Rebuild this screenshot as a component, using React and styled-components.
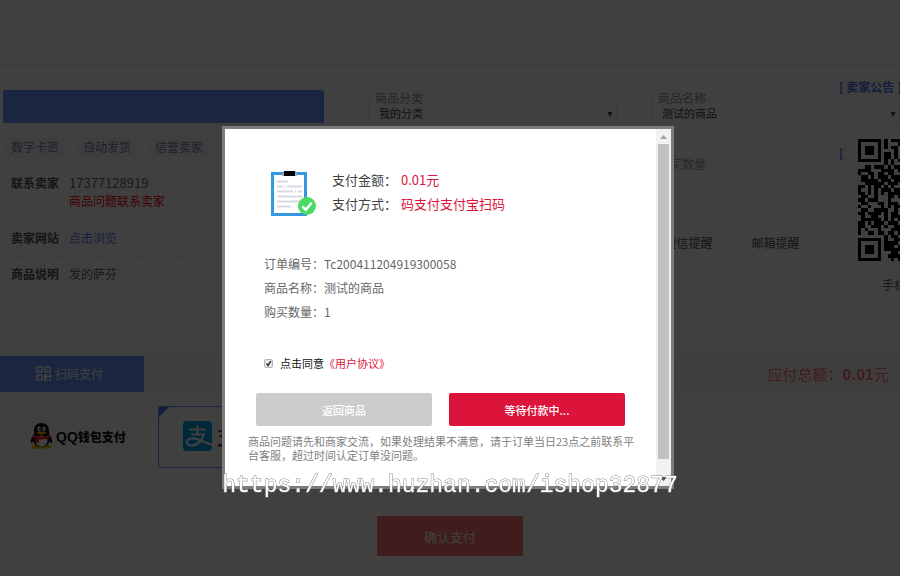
import React, { useState } from "react";
import styled, { createGlobalStyle } from "styled-components";

const GlobalStyle = createGlobalStyle`
  * {
    box-sizing: border-box;
  }
  body {
    margin: 0;
    background: #fff;
    color: #666;
    font-family: "Noto Sans CJK SC", sans-serif;
    font-size: 12px;
    line-height: 18px;
  }
  button,
  input,
  select {
    margin: 0;
    font-family: inherit;
  }
  a {
    text-decoration: none;
  }
`;

const Page = styled.div`
  position: relative;
  min-height: 100vh;
  overflow: hidden;
`;

const Header = styled.header`
  height: 65px;
  border-bottom: 1px solid #e6e6e6;
`;

const Main = styled.main`
  display: grid;
  grid-template-columns: 333px 1fr;
  column-gap: 35px;
  padding-top: 16px;
`;

const Seller = styled.section`
  height: 243px;
  padding: 8px 8px 0 3px;
  border: 1px solid #f0f0f0;
  border-left: none;
`;

const SellerTitle = styled.div`
  height: 33px;
  border-radius: 2px;
  background: #6898ff;
`;

const Tags = styled.div`
  display: flex;
  gap: 10px;
  margin: 14px 0 17px 1px;
`;

const Tag = styled.span`
  padding: 0 7px;
  line-height: 20px;
  background: #f7f7f7;
  color: #7c82b4;
`;

const Facts = styled.dl`
  margin: 0 0 0 8px;
`;

const Fact = styled.div`
  display: flex;
  gap: 10px;
  padding: 0 0 10px;
  & + & {
    padding: 8px 0 9px;
    border-top: 1px dashed #e4e4e4;
  }
  dt {
    font-weight: 700;
    color: #555;
  }
  dd {
    margin: 0;
  }
  a {
    color: #5a80f0;
  }
`;

const Phone = styled.div`
  font-size: 13px;
`;

const Warning = styled.div`
  color: #f00;
`;

const Order = styled.section`
  position: relative;
`;

const Fields = styled.form`
  display: grid;
  grid-template-columns: 1fr 1fr;
  gap: 17px 34px;
`;

const Field = styled.div`
  display: flex;
  flex-direction: column;
  min-width: 0;
`;

const Hint = styled.a`
  height: 11px;
  line-height: 11px;
  padding-left: 188px;
  font-weight: 700;
  white-space: nowrap;
  color: #4a78f0;
`;

const FieldBox = styled.fieldset`
  position: relative;
  min-width: 0;
  height: 38px;
  margin: 0;
  padding: 0;
  border: 1px solid #ececec;
  legend {
    margin-left: 2px;
    padding: 0 4px;
    line-height: 12px;
    color: #999;
  }
  svg {
    position: absolute;
    right: 3px;
    top: 7px;
  }
`;

const Select = styled.select`
  display: block;
  width: 100%;
  height: 18px;
  padding: 0 10px;
  appearance: none;
  border: none;
  background: transparent;
  font-size: 11px;
  color: #444;
`;

const Quantity = styled.input`
  display: block;
  width: 100%;
  height: 18px;
  padding: 0 10px;
  border: none;
  background: transparent;
  font-size: 11px;
`;

const Notices = styled.div`
  display: flex;
  gap: 12px;
  margin-top: 14px;
`;

const Notice = styled.button`
  flex: none;
  width: 75px;
  height: 31px;
  padding: 0;
  border: 1px solid #f0f0f0;
  border-radius: 2px;
  background: transparent;
  font-size: 12px;
  line-height: 28px;
  color: #555;
`;

const QrCard = styled.aside`
  position: absolute;
  top: 46px;
  right: -93px;
  width: 148px;
  height: 180px;
  padding: 11px 12px;
  border: 1px solid #eaeaea;
  background: #fff;
  svg {
    display: block;
  }
  p {
    margin: 15px 0 0;
    padding-left: 24px;
  }
`;

const Payment = styled.section`
  margin-top: 31px;
  border-bottom: 1px solid #eee;
`;

const TabBar = styled.div`
  display: flex;
  justify-content: space-between;
  align-items: center;
  height: 37px;
  padding-right: 11px;
  background: #f8f8f8;
`;

const Tab = styled.button`
  display: flex;
  align-items: center;
  align-self: flex-end;
  justify-content: center;
  gap: 4px;
  width: 144px;
  height: 36px;
  padding: 0 5px 2px 0;
  border: none;
  background: #6898ff;
  font-size: 12px;
  color: #fff;
`;

const Total = styled.div`
  font-size: 15px;
  color: #ff7070;
`;

const Methods = styled.div`
  display: flex;
  height: 93px;
  padding-top: 14px;
`;

const Method = styled.button`
  position: relative;
  display: flex;
  align-items: center;
  justify-content: flex-start;
  gap: ${props => (props.$active ? "5px" : "3px")};
  width: 158px;
  height: 62px;
  padding: 0 0 2px ${props => (props.$active ? "24px" : "30px")};
  border: ${props => (props.$active ? "1px solid #6090ff" : "none")};
  border-radius: 2px;
  background: transparent;
  font-size: 12px;
  font-weight: 900;
  white-space: nowrap;
  color: #111;
  &::before {
    content: "";
    display: ${props => (props.$active ? "block" : "none")};
    position: absolute;
    top: 0;
    left: 0;
    border: 5px solid transparent;
    border-top-color: #4a78f0;
    border-left-color: #4a78f0;
  }
`;

const Latin = styled.span`
  font-family: "Liberation Sans", sans-serif;
  font-size: 14px;
  font-weight: 700;
`;

const AlipayName = styled.span`
  font-size: 20px;
  font-weight: 500;
  color: #444;
`;

const Confirm = styled.button`
  display: block;
  width: 146px;
  height: 40px;
  margin: 30px auto 0;
  border: none;
  border-radius: 2px;
  background: #ff7070;
  font-size: 13px;
  color: #fff;
`;

const Overlay = styled.div`
  position: fixed;
  inset: 0;
  display: flex;
  align-items: flex-start;
  justify-content: center;
  padding: 126px 4px 0 0;
  background: rgba(0, 0, 0, 0.75);
`;

const Dialog = styled.div`
  display: flex;
  width: 452px;
  border: 3px solid #7c7c7c;
  background: #fff;
`;

const DialogBody = styled.div`
  flex: 1;
  min-width: 0;
  padding: 39px 0 24px;
`;

const ScrollBar = styled.div`
  display: flex;
  flex-direction: column;
  align-items: center;
  width: 15px;
  background: #f1f1f1;
  svg {
    display: block;
    flex: none;
  }
`;

const Thumb = styled.div`
  flex: 1;
  width: 11px;
  margin-bottom: 12px;
  background: #c1c1c1;
`;

const Summary = styled.div`
  display: flex;
  gap: 15px;
  padding-left: 46px;
  font-size: 13px;
  line-height: 24px;
  color: #444;
`;

const SummaryRow = styled.div`
  display: flex;
  gap: 4px;
  strong {
    font-weight: 400;
    color: #dc143c;
  }
`;

const Details = styled.div`
  padding: 36px 39px 0;
  line-height: 24px;
`;

const Agree = styled.div`
  display: flex;
  align-items: center;
  margin: 30px 39px 0;
  font-size: 11px;
  color: #111;
  label {
    margin-left: 7px;
  }
  a {
    color: #dc143c;
  }
`;

const Tick = styled.input`
  appearance: none;
  width: 9px;
  height: 9px;
  border: 1px solid #b4b4b4;
  border-radius: 2px;
  background: #e8e8e8;
  &:checked {
    background: #e8e8e8
      url("data:image/svg+xml,%3Csvg xmlns='http://www.w3.org/2000/svg' viewBox='0 0 9 9'%3E%3Cpath d='M2 4.5L4 7L7.5 1.5' fill='none' stroke='%23333' stroke-width='2'/%3E%3C/svg%3E");
  }
`;

const Actions = styled.div`
  display: flex;
  gap: 17px;
  margin: 21px 31px 8px;
`;

const Action = styled.button`
  flex: 1;
  height: 33px;
  padding: 0;
  border: none;
  border-radius: 2px;
  background: ${props => (props.$primary ? "#dc143c" : "#ccc")};
  font-size: 11px;
  font-weight: 500;
  color: #fff;
`;

const Note = styled.p`
  margin: 0;
  padding: 0 20px 0 23px;
  font-size: 11px;
  line-height: 14px;
  color: #808080;
`;

const Watermark = styled.div`
  position: fixed;
  top: 473px;
  left: 0;
  right: 0;
  text-align: center;
  font-family: "Liberation Mono", monospace;
  font-size: 23px;
  line-height: 26px;
  color: #fff;
  paint-order: stroke;
  -webkit-text-stroke: 1px #8a8a8a;
  pointer-events: none;
`;

const QR_ROWS = [
  "1111111010111",
  "1000001010001",
  "1011101010110",
  "1011101000010",
  "1011101011010",
  "1000001011010",
  "1111111010101",
  "0000000010100",
  "0011011101011",
  "1111000111101",
  "1001101101100",
  "0110101110111",
  "0111110111011",
  "0011111101110",
  "1101011010100",
  "1001010111011",
  "1101010101111",
  "0110010001101",
  "1101110001000",
  "0110001101110",
  "1001000101011",
  "0110011110010",
  "1101111010110",
  "0100110010111",
  "0111111010101",
  "1101011101110",
  "1100111010011",
  "1010001000111",
  "1001101101101",
  "0000000010110",
  "1111111010011",
  "1000001011110",
  "1011101011101",
  "1011101011111",
  "1011101000110",
  "1000001001111",
  "1111111000101"
];

// columns past the listed ones repeat the data area
const qrPath = QR_ROWS.map((row, y) => {
  const cells = row + QR_ROWS[(y * 5 + 9) % 37] + QR_ROWS[(y * 7 + 4) % 37];
  return cells
    .slice(0, 37)
    .split("")
    .map((cell, x) => (cell === "1" ? `M${x} ${y}h1v1h-1z` : ""))
    .join("");
}).join("");

const QrCode = () => (
  <svg width="122" height="122" viewBox="0 0 37 37" shapeRendering="crispEdges">
    <path d={qrPath} fill="#000" />
  </svg>
);

const SmallArrow = () => (
  <svg width="6" height="6" viewBox="0 0 6 6">
    <path d="M0.5 1h5L3 6z" fill="#444" />
  </svg>
);

const ScanIcon = () => (
  <svg width="15" height="15" viewBox="0 0 15 15">
    <path
      d="M1 1h5v5H1zM9 1h5v5H9zM1 9h5v5H1z"
      fill="none"
      stroke="#fff"
      strokeWidth="1.5"
    />
    <path
      d="M3 3h1v1H3zM11 3h1v1h-1zM3 11h1v1H3zM8 8h3v2h2V8h2v4h-2v-1h-2v1h-1v3H8zM11 13h1v2h-1zM13 13h2v2h-2z"
      fill="#fff"
    />
  </svg>
);

const Penguin = () => (
  <svg width="23" height="26" viewBox="0 0 23 26">
    <ellipse cx="7" cy="23.500" rx="5" ry="2.300" fill="#f8b500" />
    <ellipse cx="16" cy="23.500" rx="5" ry="2.300" fill="#f8b500" />
    <path
      d="M11.500 0C6.500 0 4 3.500 4 8v3C1.500 14 .5 17 .8 20c.8 1 2-1 2.700-1.700C4.500 22 7.500 24 11.500 24s7-2 8-5.700c.7.700 1.900 2.700 2.700 1.700.3-3-.7-6-3.200-9V8c0-4.500-2.500-8-7.500-8z"
      fill="#111"
    />
    <ellipse cx="11.500" cy="18" rx="6" ry="5.500" fill="#fff" />
    <ellipse cx="9" cy="6" rx="1.700" ry="2.400" fill="#fff" />
    <ellipse cx="14" cy="6" rx="1.700" ry="2.400" fill="#fff" />
    <circle cx="9.500" cy="6.300" r=".8" fill="#111" />
    <circle cx="13.500" cy="6.300" r=".8" fill="#111" />
    <path d="M6 9.500q5.500-2 11 0q-5.500 4-11 0z" fill="#f8b500" />
    <path
      d="M3.500 11.500q8 4 16 0l.8 3q-5 2.500-11.300 2v3.500l-4-.5.500-4-2.700-1z"
      fill="#e8281e"
    />
  </svg>
);

const AlipayIcon = () => (
  <svg width="29" height="30" viewBox="0 0 29 30">
    <rect width="29" height="30" rx="4" fill="#00a0e9" />
    <path
      d="M6 8.500h17M14.500 4.500v9M8 13.500h13c-1.500 5-6 11-12 11-6 0-7-6-1-7 6-.8 12 3.500 21 6.500"
      fill="none"
      stroke="#fff"
      strokeWidth="2.200"
    />
  </svg>
);

const Clipboard = () => (
  <svg width="46" height="48" viewBox="0 0 46 48">
    <rect x="1.500" y="5.500" width="33" height="41" fill="#fff" stroke="#3498e0" strokeWidth="3" />
    <path d="M11 8V5h3V3h9v2h3v3z" fill="#aaa" />
    <path d="M13 3h11v5H13z" fill="#000" />
    <path
      d="M6 13.500h11M6 18.500h6M13.500 18.500h1M16 18.500h15M6 23.500h16M24 23.500h1M26.500 23.500h5M6 28.500h26M6 33.500h23M6 38.500h14"
      stroke="#d5dae0"
      strokeWidth="2"
    />
    <circle cx="36" cy="38" r="9" fill="#4cd964" />
    <path d="M31.500 38.500l3.200 3.200 6-7" fill="none" stroke="#fff" strokeWidth="2.500" />
  </svg>
);

const ScrollArrow = ({ down }) => (
  <svg width="15" height="15" viewBox="0 0 15 15">
    <path d={down ? "M4 6h7L7.500 10z" : "M4 10h7L7.500 6z"} fill={down ? "#505050" : "#a3a3a3"} />
  </svg>
);

const details = [
  ["订单编号", "Tc200411204919300058"],
  ["商品名称", "测试的商品"],
  ["购买数量", "1"]
];

const App = () => {
  const [agreed, setAgreed] = useState(true);
  return (
    <Page>
      <GlobalStyle />
      <Header />
      <Main>
        <Seller>
          <SellerTitle />
          <Tags>
            <Tag>数字卡密</Tag>
            <Tag>自动发货</Tag>
            <Tag>信誉卖家</Tag>
          </Tags>
          <Facts>
            <Fact>
              <dt>联系卖家</dt>
              <dd>
                <Phone>17377128919</Phone>
                <Warning>商品问题联系卖家</Warning>
              </dd>
            </Fact>
            <Fact>
              <dt>卖家网站</dt>
              <dd>
                <a href="#site">点击浏览</a>
              </dd>
            </Fact>
            <Fact>
              <dt>商品说明</dt>
              <dd>发的萨芬</dd>
            </Fact>
          </Facts>
        </Seller>
        <Order>
          <Fields>
            <Field>
              <Hint as="div" />
              <FieldBox>
                <legend>商品分类</legend>
                <Select aria-label="商品分类">
                  <option>我的分类</option>
                </Select>
                <SmallArrow />
              </FieldBox>
            </Field>
            <Field>
              <Hint href="#notice">[ 卖家公告 ]</Hint>
              <FieldBox>
                <legend>商品名称</legend>
                <Select aria-label="商品名称">
                  <option>测试的商品</option>
                </Select>
                <SmallArrow />
              </FieldBox>
            </Field>
            <Field />
            <Field>
              <Hint href="#stock">[</Hint>
              <FieldBox>
                <legend>购买数量</legend>
                <Quantity aria-label="购买数量" />
              </FieldBox>
            </Field>
            <Field />
            <Notices>
              <Notice type="button">短信提醒</Notice>
              <Notice type="button">邮箱提醒</Notice>
            </Notices>
          </Fields>
          <QrCard>
            <QrCode />
            <p>手机</p>
          </QrCard>
        </Order>
      </Main>
      <Payment>
        <TabBar>
          <Tab type="button">
            <ScanIcon />
            扫码支付
          </Tab>
          <Total>
            应付总额：<b>0.01</b>元
          </Total>
        </TabBar>
        <Methods>
          <Method type="button">
            <Penguin />
            <span>
              <Latin>QQ</Latin>钱包支付
            </span>
          </Method>
          <Method type="button" $active>
            <AlipayIcon />
            <AlipayName>支付宝</AlipayName>
          </Method>
        </Methods>
      </Payment>
      <Confirm type="button">确认支付</Confirm>
      <Overlay>
        <Dialog role="dialog">
          <DialogBody>
            <Summary>
              <Clipboard />
              <div>
                <SummaryRow>
                  支付金额：<strong>0.01元</strong>
                </SummaryRow>
                <SummaryRow>
                  支付方式：<strong>码支付支付宝扫码</strong>
                </SummaryRow>
              </div>
            </Summary>
            <Details>
              {details.map(([name, value]) => (
                <div key={name}>
                  {name}：{value}
                </div>
              ))}
            </Details>
            <Agree>
              <Tick
                id="agree"
                type="checkbox"
                checked={agreed}
                onChange={e => setAgreed(e.target.checked)}
              />
              <label htmlFor="agree">点击同意</label>
              <a href="#terms">《用户协议》</a>
            </Agree>
            <Actions>
              <Action type="button">返回商品</Action>
              <Action type="button" $primary>
                等待付款中...
              </Action>
            </Actions>
            <Note>
              商品问题请先和商家交流，如果处理结果不满意，请于订单当日23点之前联系平台客服，超过时间认定订单没问题。
            </Note>
          </DialogBody>
          <ScrollBar>
            <ScrollArrow />
            <Thumb />
            <ScrollArrow down />
          </ScrollBar>
        </Dialog>
      </Overlay>
      <Watermark>https://www.huzhan.com/ishop32877</Watermark>
    </Page>
  );
};

export default App;
